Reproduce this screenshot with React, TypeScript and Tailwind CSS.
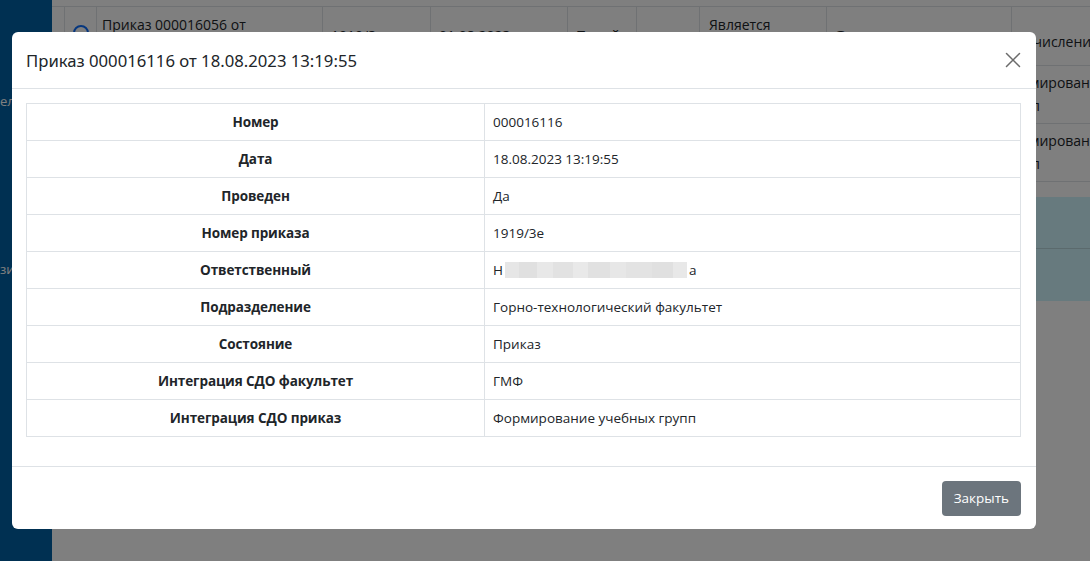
import React from "react";

const rows: [string, React.ReactNode][] = [
  ["Номер", "000016116"],
  ["Дата", "18.08.2023 13:19:55"],
  ["Проведен", "Да"],
  ["Номер приказа", "1919/3е"],
  [
    "Ответственный",
    <span className="inline-flex items-center">
      Н
      <span className="inline-flex h-[16px] ml-[2px] mr-[2px]">
        <span className="w-[14px] bg-[#e6e6e6]" />
        <span className="w-[18px] bg-[#e0e0e0]" />
        <span className="w-[16px] bg-[#e8e8e8]" />
        <span className="w-[20px] bg-[#e2e2e2]" />
        <span className="w-[15px] bg-[#e9e9e9]" />
        <span className="w-[22px] bg-[#e1e1e1]" />
        <span className="w-[16px] bg-[#e7e7e7]" />
        <span className="w-[26px] bg-[#e3e3e3]" />
        <span className="w-[21px] bg-[#e0e0e0]" />
        <span className="w-[14px] bg-[#e8e8e8]" />
      </span>
      а
    </span>,
  ],
  ["Подразделение", "Горно-технологический факультет"],
  ["Состояние", "Приказ"],
  ["Интеграция СДО факультет", "ГМФ"],
  ["Интеграция СДО приказ", "Формирование учебных групп"],
];

export default function App() {
  return (
    <div
      className="relative w-[1090px] h-[561px] overflow-hidden bg-white flex"
      style={{ fontFamily: '"Open Sans", "Noto Sans", sans-serif' }}
    >
      {/* Sidebar */}
      <div className="w-[52px] shrink-0 h-full bg-[#0061a4] flex flex-col text-white text-[13px] overflow-hidden">
        <div className="h-[92px]" />
        <div className="whitespace-nowrap">ели</div>
        <div className="h-[148px]" />
        <div className="whitespace-nowrap">зии</div>
      </div>

      {/* Background table */}
      <div className="flex-1 min-w-0 pt-[6px] text-[#212529] text-[14px]">
        <div className="border-t border-[#dee2e6]">
          <div className="flex h-[59px] border-b border-[#dee2e6]">
            <div className="w-[13px] shrink-0 border-r border-[#dee2e6]" />
            <div className="w-[32px] shrink-0 border-r border-[#dee2e6] flex justify-center pt-[18px]">
              <span className="w-[16px] h-[16px] rounded-full border-2 border-[#0d6efd]" />
            </div>
            <div className="w-[226px] shrink-0 border-r border-[#dee2e6] px-[5px] pt-[8px] leading-[20px]">Приказ 000016056 от</div>
            <div className="w-[108px] shrink-0 border-r border-[#dee2e6] pt-[18px] px-2">1919/3</div>
            <div className="w-[137px] shrink-0 border-r border-[#dee2e6] pt-[18px] px-2">01.08.2023</div>
            <div className="w-[69px] shrink-0 border-r border-[#dee2e6] pt-[18px] px-2">Прикй</div>
            <div className="w-[63px] shrink-0 border-r border-[#dee2e6]" />
            <div className="w-[127px] shrink-0 border-r border-[#dee2e6] px-[9px] pt-[8px] leading-[20px]">Является</div>
            <div className="w-[185px] shrink-0 border-r border-[#dee2e6] pt-[18px] px-2">Ф</div>
            <div className="flex-1 min-w-0 pt-[24px] px-[4px] whitespace-nowrap overflow-hidden">Отчисление</div>
          </div>
          {[0, 1].map((i) => (
            <div key={i} className="flex h-[58px] border-b border-[#dee2e6]">
              <div className="w-[947px] shrink-0 border-r border-[#dee2e6]" />
              <div className="flex-1 min-w-0 pl-[2px] pt-[5px] leading-[23px] whitespace-nowrap overflow-hidden">
                <div>Формирование</div>
                <div>групп</div>
              </div>
            </div>
          ))}
          <div className="h-[15px]" />
          <div className="h-[52px] bg-[#cff4fc] border-b border-[#b6d4da]" />
          <div className="h-[52px] bg-[#cff4fc]" />
        </div>
      </div>

      {/* Backdrop */}
      <div className="absolute inset-0 bg-black/50" />

      {/* Modal */}
      <div className="absolute left-[12px] top-[32px] w-[1024px] h-[497px] bg-white rounded-[6px] flex flex-col text-[#212529]">
        <div className="h-[57px] border-b border-[#dee2e6] flex items-center justify-between pl-[14px] pr-[15px]">
          <div className="text-[16.7px] leading-[27px]" style={{ fontFamily: '"Noto Sans", "Open Sans", sans-serif' }}>
            Приказ 000016116 от 18.08.2023 13:19:55
          </div>
          <svg width="16" height="16" viewBox="0 0 16 16">
            <path d="M1.5 1.5 L14.5 14.5 M14.5 1.5 L1.5 14.5" stroke="#6b6b6b" strokeWidth="1.5" strokeLinecap="round" />
          </svg>
        </div>
        <div className="pt-[14px] pl-[14px] pr-[15px] pb-[29px] border-b border-[#dee2e6]">
          <table className="w-full border-collapse text-[13.5px]">
            <tbody>
              {rows.map(([k, v], i) => (
                <tr key={i}>
                  <td className="w-[458px] border border-[#dee2e6] py-[8px] leading-[20px] text-center font-bold text-[13.5px] tracking-[-0.1px] text-[#212529]">
                    {k}
                  </td>
                  <td className="border border-[#dee2e6] py-[8px] px-[8px] leading-[20px] text-[#212529]">{v}</td>
                </tr>
              ))}
            </tbody>
          </table>
        </div>
        <div className="flex-1 flex justify-end items-start pt-[14px] pr-[15px]">
          <button className="h-[35px] px-[12px] bg-[#6c757d] text-white text-[13.5px] rounded-[4px]">Закрыть</button>
        </div>
      </div>
    </div>
  );
}
